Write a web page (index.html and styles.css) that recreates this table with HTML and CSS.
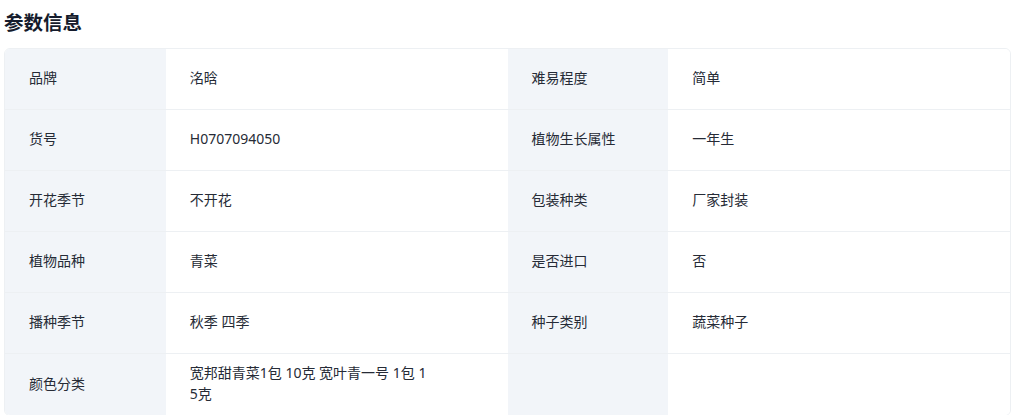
FILE: index.html
```html
<!DOCTYPE html>
<html lang="zh-CN">
<head>
<meta charset="utf-8">
<link rel="stylesheet" href="styles.css">
</head>
<body>
<div class="page">
  <h2 class="title">参数信息</h2>
  <div class="table">
    <div class="row">
      <div class="label">品牌</div><div class="value">洺晗</div>
      <div class="label">难易程度</div><div class="value">简单</div>
    </div>
    <div class="row">
      <div class="label">货号</div><div class="value">H0707094050</div>
      <div class="label">植物生长属性</div><div class="value">一年生</div>
    </div>
    <div class="row">
      <div class="label">开花季节</div><div class="value">不开花</div>
      <div class="label">包装种类</div><div class="value">厂家封装</div>
    </div>
    <div class="row">
      <div class="label">植物品种</div><div class="value">青菜</div>
      <div class="label">是否进口</div><div class="value">否</div>
    </div>
    <div class="row">
      <div class="label">播种季节</div><div class="value">秋季 四季</div>
      <div class="label">种子类别</div><div class="value">蔬菜种子</div>
    </div>
    <div class="row last">
      <div class="label">颜色分类</div><div class="value"><span class="wrap">宽邦甜青菜1包 10克 宽叶青一号 1包 15克</span></div>
      <div class="label"></div><div class="value"></div>
    </div>
  </div>
</div>
</body>
</html>
```

FILE: styles.css
```css
* { box-sizing: border-box; }
html, body { margin: 0; padding: 0; background: #ffffff; }
body {
  font-family: "Noto Sans", "Noto Sans CJK SC", sans-serif;
  color: #1f2430;
}
.page { padding: 0 3px 0 4px; }
.title {
  margin: 0;
  height: 48px;
  display: flex;
  align-items: center;
  padding-bottom: 5px;
  font-family: "Noto Sans CJK SC", sans-serif;
  font-size: 19.5px;
  font-weight: 700;
  color: #151b2c;
}
.table {
  border: 1px solid #edf0f3;
  border-radius: 6px;
  overflow: hidden;
}
.row {
  display: grid;
  grid-template-columns: 16fr 34fr 16fr 34fr;
  border-bottom: 1px solid #edf0f3;
  min-height: 61px;
}
.row.last { border-bottom: none; }
.label, .value {
  display: flex;
  align-items: center;
  padding: 0 24px 3px;
  font-size: 14px;
  line-height: 21px;
}
.label { background: #f2f5f9; color: #262b36; }
.value { background: #ffffff; color: #262b36; }
.wrap { max-width: 237px; word-break: break-all; }
```
